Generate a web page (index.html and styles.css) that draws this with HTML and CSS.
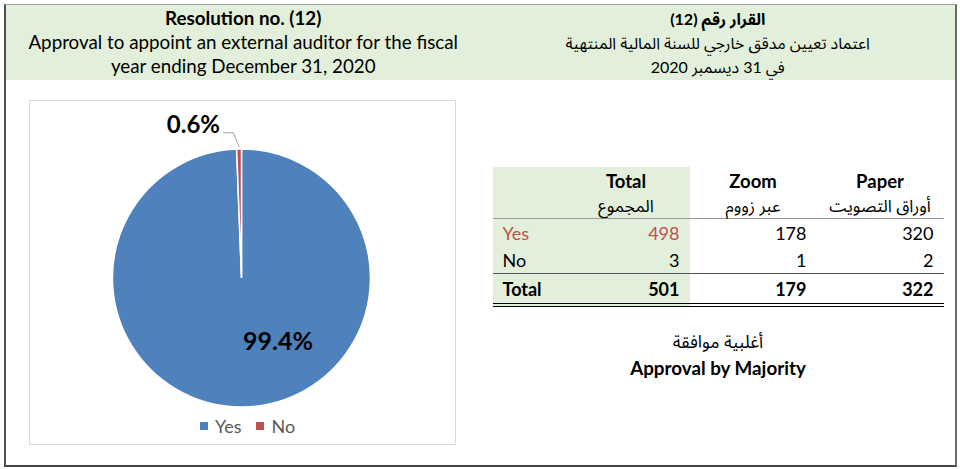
FILE: index.html
```html
<!DOCTYPE html>
<html lang="en">
<head>
<meta charset="utf-8">
<title>Resolution no. (12)</title>
<link rel="stylesheet" href="styles.css">
</head>
<body>
<div class="page">
  <div class="frame">
    <header class="head">
      <div class="head-col en">
        <div class="title">Resolution no. (12)</div>
        <div>Approval to appoint an external auditor for the fiscal</div>
        <div>year ending December 31, 2020</div>
      </div>
      <div class="head-col ar" dir="rtl" lang="ar">
        <div class="title">القرار رقم (12)</div>
        <div>اعتماد تعيين مدقق خارجي للسنة المالية المنتهية</div>
        <div>في 31 ديسمبر 2020</div>
      </div>
    </header>
    <main class="body">
      <section class="chart-col">
        <div class="chart">
          <svg class="pie" width="425" height="310" viewBox="0 0 425 310">
            <path d="M211.5 177 L211.5 48 A129 129 0 1 1 206.64 48.09 Z" fill="#4f81bd" stroke="#ffffff" stroke-width="1.5"/>
            <path d="M211.5 177 L206.64 48.09 A129 129 0 0 1 211.5 48 Z" fill="#c0504d" stroke="#ffffff" stroke-width="1.5"/>
            <polyline points="193.3,31.7 203.3,31.7 209.3,46.3" fill="none" stroke="#a6a6a6" stroke-width="1"/>
            <text class="pct" x="190" y="32" text-anchor="end">0.6%</text>
            <text class="pct big" x="213" y="249">99.4%</text>
          </svg>
          <div class="legend">
            <span class="key"><span class="swatch yes"></span>Yes</span>
            <span class="key"><span class="swatch no"></span>No</span>
          </div>
        </div>
      </section>
      <section class="table-col">
        <table class="votes">
          <thead>
            <tr>
              <th class="g"></th>
              <th class="g">Total<br><span lang="ar">المجموع</span></th>
              <th>Zoom<br><span lang="ar">عبر زووم</span></th>
              <th>Paper<br><span lang="ar">أوراق التصويت</span></th>
            </tr>
          </thead>
          <tbody>
            <tr class="r-yes">
              <td class="g lbl red">Yes</td>
              <td class="g num red">498</td>
              <td class="num">178</td>
              <td class="num">320</td>
            </tr>
            <tr class="r-no">
              <td class="g lbl">No</td>
              <td class="g num">3</td>
              <td class="num">1</td>
              <td class="num">2</td>
            </tr>
            <tr class="r-total">
              <td class="g lbl">Total</td>
              <td class="g num">501</td>
              <td class="num">179</td>
              <td class="num">322</td>
            </tr>
          </tbody>
        </table>
        <div class="verdict">
          <div class="verdict-ar" lang="ar" dir="rtl">أغلبية موافقة</div>
          <div class="verdict-en">Approval by Majority</div>
        </div>
      </section>
    </main>
  </div>
</div>
</body>
</html>
```

FILE: styles.css
```css
* {
  box-sizing: border-box;
}

html, body {
  margin: 0;
  background: #ffffff;
}

body {
  font-family: Lato, "Noto Sans Arabic", "DejaVu Sans", sans-serif;
  color: #000000;
}

.page {
  padding: 4px 3px 2px 4px;
}

.frame {
  height: 463px;
  border-top: 1px solid #a3a3a3;
  border-left: 2px solid #505050;
  border-right: 2px solid #6a6a6a;
  border-bottom: 2px solid #454545;
  display: flex;
  flex-direction: column;
}

.head {
  display: grid;
  grid-template-columns: 1fr 1fr;
  background: #e2efda;
  height: 75px;
  flex: none;
}

.head-col {
  text-align: center;
  font-size: 18.8px;
  line-height: 24px;
  padding-top: 1px;
}

.head-col .title {
  font-weight: 700;
}

.head-col.ar {
  font-size: 16px;
  padding-top: 2px;
}

.body {
  flex: 1;
  display: grid;
  grid-template-columns: 1fr 1fr;
}

.chart-col {
  padding: 20px 0 0 23px;
}

.chart {
  width: 427px;
  height: 345px;
  border: 1px solid #d9d9d9;
  display: flex;
  flex-direction: column;
}

.pie {
  display: block;
  flex: none;
}

.pct {
  font-family: Lato, sans-serif;
  font-weight: 700;
  font-size: 24px;
  fill: #000000;
}

.pct.big {
  font-size: 25px;
}

.legend {
  height: 33px;
  padding-bottom: 3px;
  line-height: 30px;
  display: flex;
  justify-content: center;
  align-items: center;
  padding-left: 10px;
  font-size: 18px;
  color: #595959;
}

.key {
  display: flex;
  align-items: center;
  gap: 7px;
}

.key + .key {
  margin-left: 15px;
}

.swatch {
  width: 8px;
  height: 8px;
  display: block;
}

.swatch.yes {
  background: #4f81bd;
}

.swatch.no {
  background: #c0504d;
}

.table-col {
  padding: 87px 0 0 12px;
  display: flex;
  flex-direction: column;
  align-items: flex-start;
}

.votes {
  width: 451px;
  border-collapse: separate;
  border-spacing: 0;
  table-layout: fixed;
  font-size: 18px;
}

.votes th:first-child,
.votes td:first-child {
  width: 70px;
}

.votes th {
  font-weight: 700;
  font-size: 18.5px;
  text-align: center;
  line-height: 24px;
  padding: 2px 0 0 0;
  border-bottom: 1px solid #9a9a9a;
  vertical-align: top;
}

.votes th span {
  font-weight: 400;
  font-size: 17px;
}

.votes td {
  padding: 0 10px;
}

.votes .g {
  background: #e2efda;
}

.votes .lbl {
  text-align: left;
}

.votes .num {
  text-align: right;
}

.votes .red {
  color: #c0504d;
}

.r-yes td {
  padding-top: 1px;
  line-height: 26px;
}

.r-no td {
  padding-top: 1px;
  line-height: 26px;
  border-bottom: 1px solid #555555;
}

.r-total td {
  padding-top: 2px;
  line-height: 27px;
  font-weight: 700;
  border-bottom: 4px double #000000;
}

.verdict {
  width: 451px;
  padding-top: 22px;
  text-align: center;
  line-height: 26px;
}

.verdict-ar {
  font-size: 17.5px;
}

.verdict-en {
  font-size: 18.8px;
  font-weight: 700;
}
```
